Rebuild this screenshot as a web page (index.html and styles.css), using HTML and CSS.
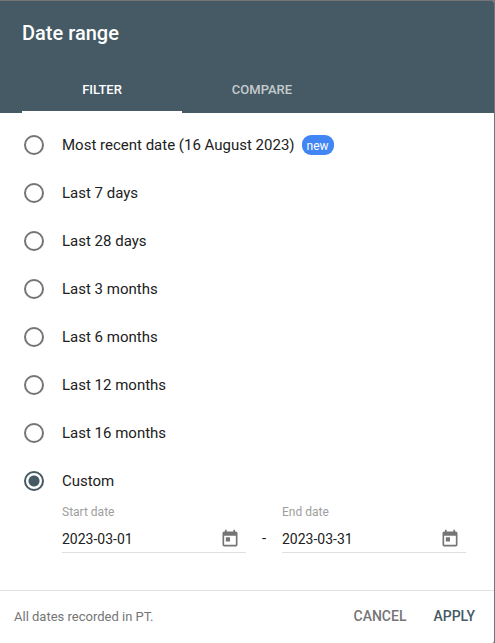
FILE: index.html
```html
<!DOCTYPE html>
<html lang="en">
<head>
    <meta charset="UTF-8">
    <meta name="viewport" content="width=device-width, initial-scale=1.0">
    <title>Date range</title>
    <link rel="stylesheet" href="styles.css">
</head>
<body>

    <form class="dialog">
        <header class="header">
            <h1>Date range</h1>
            <div class="tabs" role="tablist">
                <button type="button" class="tab active" role="tab" aria-selected="true">FILTER</button>
                <button type="button" class="tab" role="tab" aria-selected="false">COMPARE</button>
            </div>
        </header>

        <main class="options">
            <label class="option"><input type="radio" name="range" value="recent"> <span>Most recent date (16 August 2023)</span> <span class="badge">new</span></label>
            <label class="option"><input type="radio" name="range" value="7d"> <span>Last 7 days</span></label>
            <label class="option"><input type="radio" name="range" value="28d"> <span>Last 28 days</span></label>
            <label class="option"><input type="radio" name="range" value="3m"> <span>Last 3 months</span></label>
            <label class="option"><input type="radio" name="range" value="6m"> <span>Last 6 months</span></label>
            <label class="option"><input type="radio" name="range" value="12m"> <span>Last 12 months</span></label>
            <label class="option"><input type="radio" name="range" value="16m"> <span>Last 16 months</span></label>
            <label class="option"><input type="radio" name="range" value="custom" checked> <span>Custom</span></label>

            <div class="dates">
                <div class="field">
                    <label for="startDate">Start date</label>
                    <div class="field-row">
                        <input type="text" id="startDate" value="2023-03-01">
                        <button type="button" class="calendar" aria-label="Pick start date">
                            <svg viewBox="0 0 24 24" width="20" height="20"><path d="M19 3h-1V1h-2v2H8V1H6v2H5c-1.11 0-1.99.9-1.99 2L3 19c0 1.1.89 2 2 2h14c1.1 0 2-.9 2-2V5c0-1.1-.9-2-2-2zm0 16H5V8h14v11zM7 10h5v5H7z"/></svg>
                        </button>
                    </div>
                </div>
                <span class="dash">-</span>
                <div class="field">
                    <label for="endDate">End date</label>
                    <div class="field-row">
                        <input type="text" id="endDate" value="2023-03-31">
                        <button type="button" class="calendar" aria-label="Pick end date">
                            <svg viewBox="0 0 24 24" width="20" height="20"><path d="M19 3h-1V1h-2v2H8V1H6v2H5c-1.11 0-1.99.9-1.99 2L3 19c0 1.1.89 2 2 2h14c1.1 0 2-.9 2-2V5c0-1.1-.9-2-2-2zm0 16H5V8h14v11zM7 10h5v5H7z"/></svg>
                        </button>
                    </div>
                </div>
            </div>
        </main>

        <footer class="footer">
            <span class="note">All dates recorded in PT.</span>
            <button type="button" class="action">CANCEL</button>
            <button type="submit" class="action apply">APPLY</button>
        </footer>
    </form>

</body>
</html>
```
FILE: styles.css
```css
* {
    box-sizing: border-box;
}

body {
    margin: 0;
    background-color: #757575;
    font-family: Roboto, sans-serif;
    color: #212121;
}

button {
    padding: 0;
    border: none;
    background: none;
    font-family: inherit;
    cursor: pointer;
}

.dialog {
    display: flex;
    flex-direction: column;
    min-height: calc(100vh - 1px);
    margin: 1px 1px 0 0;
    background-color: #fff;
    border-radius: 0 2px 2px 0;
    overflow: hidden;
}

.header {
    padding: 20px 22px 0;
    background-color: #455a64;
    color: #fff;
}

.header h1 {
    margin: 0;
    font-size: 20px;
    line-height: 24px;
    font-weight: 500;
}

.tabs {
    display: flex;
    margin-top: 20px;
}

.tab {
    width: 160px;
    height: 48px;
    padding-top: 2px;
    border-bottom: 2px solid transparent;
    color: rgba(255, 255, 255, 0.7);
    font-size: 13px;
    font-weight: 500;
}

.tab.active {
    border-bottom-color: #fff;
    color: #fff;
}

.options {
    flex: 1;
    padding: 8px 24px;
}

.option {
    display: flex;
    align-items: center;
    height: 48px;
    font-size: 15px;
}

.option input {
    appearance: none;
    width: 20px;
    height: 20px;
    margin: 0 18px 0 0;
    border: 2px solid #757575;
    border-radius: 50%;
}

.option input:checked {
    border-color: #455a64;
    background: radial-gradient(circle, #455a64 5px, transparent 6px);
}

.badge {
    height: 20px;
    margin-left: 7px;
    padding: 0 5px;
    border-radius: 9px;
    background-color: #4285f4;
    color: #fff;
    font-size: 12px;
    line-height: 22px;
}

.dates {
    display: flex;
    align-items: flex-end;
    padding: 0 4px 0 38px;
}

.field {
    flex: 1;
    min-width: 0;
    border-bottom: 1px solid #e0e0e0;
}

.field label {
    display: block;
    color: #9e9e9e;
    font-size: 12px;
    line-height: 14px;
}

.field-row {
    display: flex;
    align-items: center;
    height: 33px;
    padding: 7px 6px 0 0;
}

.field input {
    flex: 1;
    min-width: 0;
    padding: 0;
    border: none;
    outline: none;
    background: none;
    color: inherit;
    font-family: inherit;
    font-size: 14px;
}

.calendar {
    display: flex;
}

.calendar svg {
    fill: #757575;
}

.dash {
    width: 36px;
    padding-bottom: 6px;
    font-size: 15px;
    text-align: center;
}

.footer {
    display: flex;
    align-items: center;
    gap: 27px;
    height: 53px;
    padding: 0 19px 2px 14px;
    border-top: 1px solid #e0e0e0;
}

.note {
    flex: 1;
    color: #757575;
    font-size: 13px;
}

.action {
    color: #757575;
    font-size: 14px;
    font-weight: 500;
}

.apply {
    color: #455a64;
}
```
